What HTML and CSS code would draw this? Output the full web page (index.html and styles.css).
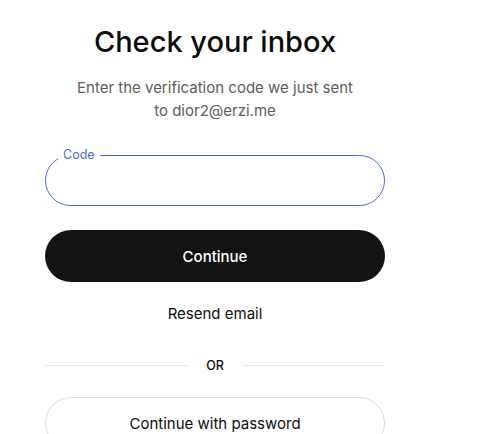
FILE: index.html
```html
<!DOCTYPE html>
<html lang="en">

<head>
    <meta charset="UTF-8" />
    <title>Check your inbox</title>
    <meta name="viewport" content="width=device-width, initial-scale=1.0" />
    <link rel="stylesheet" href="styles.css">
</head>

<body>

    <div class="card">
        <h1 class="title">Check your inbox</h1>
        <p class="subtitle">Enter the verification code we just sent<br>to dior2@erzi.me</p>

        <!-- code field -->
        <fieldset class="field">
            <legend>Code</legend>
            <input type="text" class="field-input" />
        </fieldset>

        <button class="btn-primary">Continue</button>

        <button class="btn-link">Resend email</button>

        <div class="divider">
            <span class="line"></span>
            <span class="divider-text">OR</span>
            <span class="line"></span>
        </div>

        <button class="btn-outline">Continue with password</button>
    </div>

</body>

</html>
```

FILE: styles.css
```css
body {
    margin: 0;
    font-family: Inter, 'Liberation Sans', sans-serif;
    background: #fff;
    color: #0d0d0d;
    overflow: hidden;
}

.card {
    width: 340px;
    margin-left: 45px;
    padding-top: 24px;
    display: flex;
    flex-direction: column;
    align-items: stretch;
}

.title {
    margin: 0;
    font-size: 29px;
    font-weight: 500;
    letter-spacing: 0;
    text-align: center;
    line-height: 36px;
}

.subtitle {
    margin: 16px 0 0;
    font-size: 15px;
    line-height: 23px;
    color: #5d5d5d;
    text-align: center;
}

.field {
    margin: 26px 0 0;
    padding: 0 12px;
    height: 58px;
    box-sizing: border-box;
    border: 1px solid #4a6bd6;
    border-radius: 26px;
    position: relative;
}

.field legend {
    padding: 0 5px;
    font-size: 12.5px;
    line-height: 14px;
    color: #4a6bd6;
}

.field-input {
    border: none;
    outline: none;
    width: 100%;
    height: 36px;
    font-family: inherit;
    font-size: 16px;
    background: transparent;
}

.btn-primary {
    margin-top: 24px;
    height: 52px;
    border: none;
    border-radius: 26px;
    background: #131313;
    color: #fff;
    font-family: inherit;
    font-size: 15px;
    font-weight: 500;
    cursor: pointer;
}

.btn-link {
    margin-top: 19px;
    height: 24px;
    border: none;
    background: none;
    color: #0d0d0d;
    font-family: inherit;
    font-size: 15px;
    cursor: pointer;
}

.divider {
    margin-top: 33px;
    display: flex;
    align-items: center;
    gap: 18px;
}

.line {
    flex: 1;
    height: 1px;
    background: #e6e6e6;
}

.divider-text {
    font-size: 12.5px;
    font-weight: 500;
    color: #0d0d0d;
}

.btn-outline {
    margin-top: 24px;
    height: 52px;
    border: 1px solid #dcdcdc;
    border-radius: 26px;
    background: #fff;
    color: #0d0d0d;
    font-family: inherit;
    font-size: 15px;
    cursor: pointer;
}
```
